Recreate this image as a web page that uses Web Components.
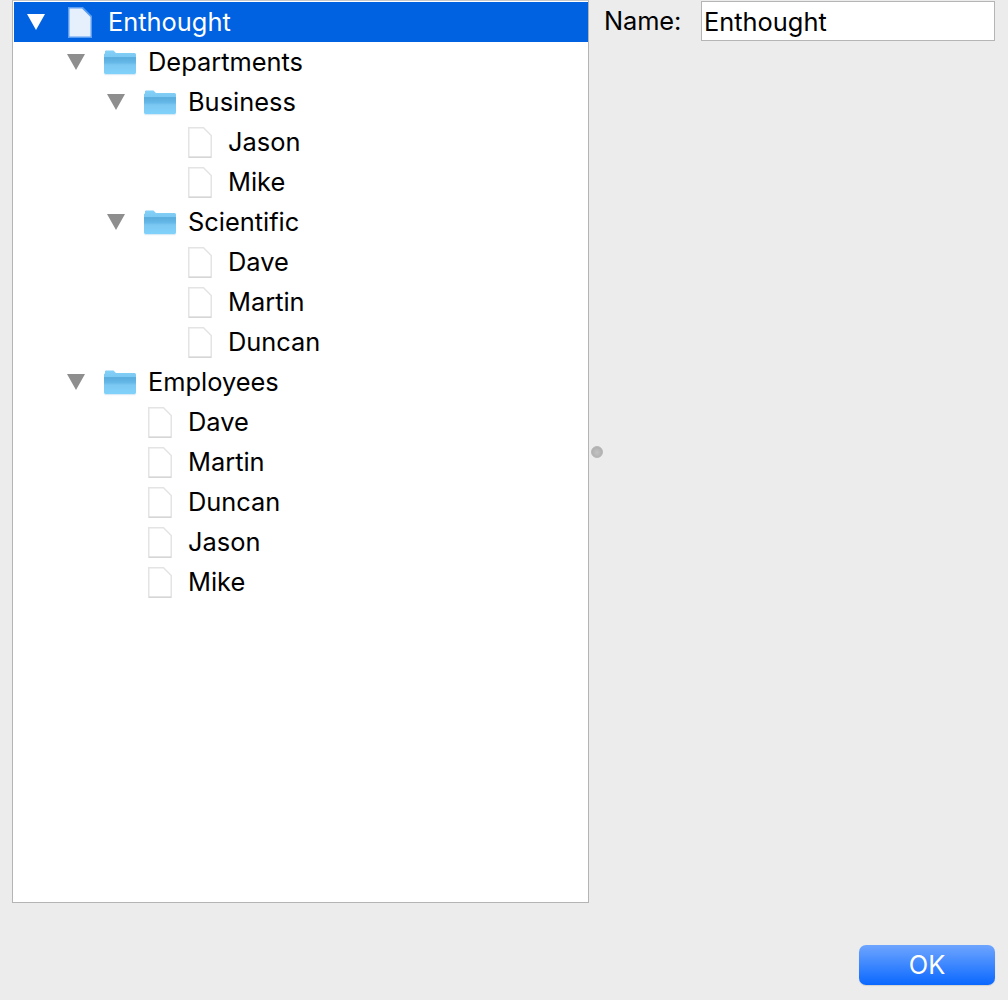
<!DOCTYPE html>
<html>
<head>
<meta charset="utf-8">
<style>
html, body { margin: 0; height: 100%; background: #ececec; }
body { font-family: Inter, "Liberation Sans", sans-serif; }
</style>
</head>
<body>
<template id="row-icons">
    <svg data-kind="folder" width="32" height="26" viewBox="0 0 32 26">
        <defs>
            <linearGradient id="fold" x1="0" y1="0" x2="0" y2="1">
                <stop offset="0" stop-color="#83d0f8"/>
                <stop offset="0.26" stop-color="#7cc9f3"/>
                <stop offset="0.3" stop-color="#5aaedd"/>
                <stop offset="0.5" stop-color="#63b6e6"/>
                <stop offset="0.62" stop-color="#7cc8f3"/>
                <stop offset="1" stop-color="#80d2fb"/>
            </linearGradient>
        </defs>
        <path d="M1 3.5V1.5Q1 .5 2 .5H9.5L12 3H30.5Q32 3 32 4.5V22.5Q32 24 30.5 24H1.5Q0 24 0 22.5V4.5Q0 3.5 1 3.5Z" fill="url(#fold)"/>
        <path d="M.5 24.6H31.5" stroke="#d9eaf4" stroke-width="1.2"/>
    </svg>
</template>

<script>
class TreeRow extends HTMLElement
{
    constructor()
    {
        super();
        this.attachShadow({ mode: 'open' });
    }

    connectedCallback()
    {
        const depth = parseInt(this.getAttribute('depth') || '0');
        const kind = this.getAttribute('kind') || 'leaf';
        const selected = this.hasAttribute('selected');
        const open = this.hasAttribute('open');
        this.shadowRoot.innerHTML = `
            <style>
                :host {
                    display: flex;
                    align-items: center;
                    height: 40px;
                    padding-left: ${12 + depth * 40}px;
                    color: #000;
                    font-size: 25.4px;
                }
                :host([selected]) { background: #0062e1; color: #fff; }
                .arrow { width: 20px; height: 16px; margin-right: 14px; display: flex; flex: none; }
                .icon { width: 40px; margin-right: 8px; display: flex; justify-content: center; align-items: center; flex: none; }
                .icon svg[data-kind="folder"] { margin-top: 2px; }
                .label { white-space: nowrap; line-height: 30px; }
            </style>
            <span class="arrow">${open ? this.arrow(selected) : ''}</span>
            <span class="icon">${this.icon(kind, selected)}</span>
            <span class="label"><slot></slot></span>
        `;
    }

    arrow(selected)
    {
        return `<svg width="20" height="16" viewBox="0 0 20 16"><path d="M1 0H19L10 16Z" fill="${selected ? '#fff' : '#8e8e8e'}"/></svg>`;
    }

    icon(kind, selected)
    {
        if (kind === 'folder')
        {
            return document.getElementById('row-icons').innerHTML;
        }
        if (selected)
        {
            return `<svg width="24" height="31" viewBox="0 0 24 31">
                <path d="M0 0H15L24 9V31H0Z" fill="#5b9df0"/>
                <path d="M1.5 1.5H14L22.5 10V29.5H1.5Z" fill="#e6f0fd"/>
            </svg>`;
        }
        return `<svg width="24" height="31" viewBox="0 0 24 31">
            <path d="M.75 .75H15.5L23.25 8.5V30.25H.75Z" fill="#fff" stroke="#e4e4e4" stroke-width="1.5"/>
            <path d="M1 30.25H23" stroke="#d6d6d6" stroke-width="1.5"/>
        </svg>`;
    }
}

class TreePane extends HTMLElement
{
    constructor()
    {
        super();
        this.attachShadow({ mode: 'open' });
        this.shadowRoot.innerHTML = `
            <style>
                :host {
                    display: block;
                    box-sizing: border-box;
                    width: 577px;
                    height: 903px;
                    margin-left: 12px;
                    padding: 1px 0 0 1px;
                    background: #fff;
                    border: 1px solid #b4b4b4;
                    border-top: 1px solid #c8c8c8;
                    overflow: hidden;
                    flex: none;
                }
            </style>
            <slot></slot>
        `;
    }
}

class SashDot extends HTMLElement
{
    constructor()
    {
        super();
        this.attachShadow({ mode: 'open' });
        this.shadowRoot.innerHTML = `
            <style>
                :host {
                    display: flex;
                    flex: none;
                    width: 16px;
                    height: 903px;
                    align-items: center;
                    justify-content: center;
                }
                .dot {
                    width: 12px;
                    height: 12px;
                    border-radius: 50%;
                    background: radial-gradient(circle at 50% 55%, #c2c2c2, #a9a9a9);
                    border: 1px solid #b5b5b5;
                    box-sizing: border-box;
                }
            </style>
            <span class="dot"></span>
        `;
    }
}

class NameField extends HTMLElement
{
    constructor()
    {
        super();
        this.attachShadow({ mode: 'open' });
        this.shadowRoot.innerHTML = `
            <style>
                :host {
                    display: flex;
                    flex: 1;
                    align-items: center;
                    height: 40px;
                    margin: 1px 13px 0 0;
                    font-size: 25.4px;
                    color: #000;
                }
                label { width: 97px; margin-left: -1px; flex: none; line-height: 42px; letter-spacing: -0.1px; }
                .box {
                    flex: 1;
                    box-sizing: border-box;
                    height: 40px;
                    line-height: 40px;
                    padding-left: 2px;
                    background: #fff;
                    border: 1px solid #b5b5b5;
                    white-space: nowrap;
                }
            </style>
            <label>Name:</label>
            <div class="box"><slot></slot></div>
        `;
    }
}

class OkButton extends HTMLElement
{
    constructor()
    {
        super();
        this.attachShadow({ mode: 'open' });
        this.shadowRoot.innerHTML = `
            <style>
                :host {
                    display: flex;
                    box-sizing: border-box;
                    width: 136px;
                    height: 40px;
                    align-items: center;
                    justify-content: center;
                    border-radius: 7px;
                    background: linear-gradient(#6ea5ff, #0a68ff);
                    box-shadow: 0 1px 1px rgba(0, 0, 0, 0.12);
                    color: #fff;
                    font-size: 25.4px;
                    line-height: 30px;
                }
            </style>
            <slot></slot>
        `;
    }
}

class TreeDialog extends HTMLElement
{
    constructor()
    {
        super();
        this.attachShadow({ mode: 'open' });
        this.shadowRoot.innerHTML = `
            <style>
                :host {
                    display: flex;
                    flex-direction: column;
                    width: 1008px;
                    height: 1000px;
                    background: #ececec;
                    overflow: hidden;
                }
                .main { display: flex; align-items: flex-start; }
                .buttons { display: flex; justify-content: flex-end; padding: 42px 13px 0 0; }
            </style>
            <div class="main">
                <slot name="tree"></slot>
                <sash-dot></sash-dot>
                <slot name="form"></slot>
            </div>
            <div class="buttons"><slot name="buttons"></slot></div>
        `;
    }
}

customElements.define('tree-row', TreeRow);
customElements.define('tree-pane', TreePane);
customElements.define('sash-dot', SashDot);
customElements.define('name-field', NameField);
customElements.define('ok-button', OkButton);
customElements.define('tree-dialog', TreeDialog);
</script>

<tree-dialog>
    <tree-pane slot="tree">
        <tree-row depth="0" kind="doc" open selected>Enthought</tree-row>
        <tree-row depth="1" kind="folder" open>Departments</tree-row>
        <tree-row depth="2" kind="folder" open>Business</tree-row>
        <tree-row depth="3">Jason</tree-row>
        <tree-row depth="3">Mike</tree-row>
        <tree-row depth="2" kind="folder" open>Scientific</tree-row>
        <tree-row depth="3">Dave</tree-row>
        <tree-row depth="3">Martin</tree-row>
        <tree-row depth="3">Duncan</tree-row>
        <tree-row depth="1" kind="folder" open>Employees</tree-row>
        <tree-row depth="2">Dave</tree-row>
        <tree-row depth="2">Martin</tree-row>
        <tree-row depth="2">Duncan</tree-row>
        <tree-row depth="2">Jason</tree-row>
        <tree-row depth="2">Mike</tree-row>
    </tree-pane>
    <name-field slot="form">Enthought</name-field>
    <ok-button slot="buttons">OK</ok-button>
</tree-dialog>
</body>
</html>
